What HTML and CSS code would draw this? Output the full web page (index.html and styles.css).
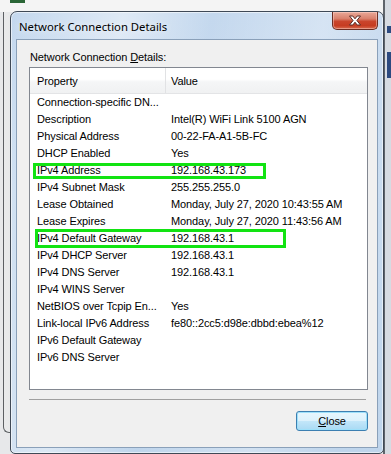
FILE: index.html
```html
<!DOCTYPE html>
<html>
<head>
<meta charset="utf-8">
<title>Network Connection Details</title>
<link rel="stylesheet" href="styles.css">
</head>
<body>
<div class="desktop">
  <div class="topstrip"><span class="greenblock"></span></div>
  <div class="bgwin"></div>
  <div class="rightstrip">
    <span class="rs-dark"></span>
    <span class="rs-blue rs-blue1"></span>
    <span class="rs-blue rs-blue2"></span>
  </div>

  <div class="dialog">
    <div class="titlebar">
      <span class="title">Network Connection Details</span>
      <button class="xbtn" aria-label="Close">
        <svg width="14" height="11" viewBox="0 0 14 11">
          <path d="M1.5 1 H4.8 L7 3.8 L9.2 1 H12.5 L8.9 5.5 L12.5 10 H9.2 L7 7.2 L4.8 10 H1.5 L5.1 5.5 Z" fill="#ffffff" stroke="#5a2b24" stroke-width="1" stroke-linejoin="round"/>
        </svg>
      </button>
    </div>
    <div class="client">
      <div class="label">Network Connection <u>D</u>etails:</div>
      <div class="listview">
        <div class="header">
          <div class="hcol c1">Property</div>
          <div class="hcol c2">Value</div>
        </div>
        <div class="rows">
          <div class="row"><span class="c1">Connection-specific DN...</span><span class="c2"></span></div>
          <div class="row"><span class="c1">Description</span><span class="c2">Intel(R) WiFi Link 5100 AGN</span></div>
          <div class="row"><span class="c1">Physical Address</span><span class="c2">00-22-FA-A1-5B-FC</span></div>
          <div class="row"><span class="c1">DHCP Enabled</span><span class="c2">Yes</span></div>
          <div class="row"><span class="c1">IPv4 Address</span><span class="c2">192.168.43.173</span></div>
          <div class="row"><span class="c1">IPv4 Subnet Mask</span><span class="c2">255.255.255.0</span></div>
          <div class="row"><span class="c1">Lease Obtained</span><span class="c2">Monday, July 27, 2020 10:43:55 AM</span></div>
          <div class="row"><span class="c1">Lease Expires</span><span class="c2">Monday, July 27, 2020 11:43:56 AM</span></div>
          <div class="row"><span class="c1">IPv4 Default Gateway</span><span class="c2">192.168.43.1</span></div>
          <div class="row"><span class="c1">IPv4 DHCP Server</span><span class="c2">192.168.43.1</span></div>
          <div class="row"><span class="c1">IPv4 DNS Server</span><span class="c2">192.168.43.1</span></div>
          <div class="row"><span class="c1">IPv4 WINS Server</span><span class="c2"></span></div>
          <div class="row"><span class="c1">NetBIOS over Tcpip En...</span><span class="c2">Yes</span></div>
          <div class="row"><span class="c1">Link-local IPv6 Address</span><span class="c2">fe80::2cc5:d98e:dbbd:ebea%12</span></div>
          <div class="row"><span class="c1">IPv6 Default Gateway</span><span class="c2"></span></div>
          <div class="row"><span class="c1">IPv6 DNS Server</span><span class="c2"></span></div>
        </div>
      </div>
      <div class="sep"></div>
      <div class="footer">
        <button class="closebtn"><u>C</u>lose</button>
      </div>
    </div>
  </div>

  <div class="hl hl1"></div>
  <div class="hl hl2"></div>
</div>
</body>
</html>
```

FILE: styles.css
```css
* { box-sizing: border-box; }

html, body {
  margin: 0;
  padding: 0;
}

body {
  width: 391px;
  height: 454px;
  overflow: hidden;
  background: #e7e8ea;
  font-family: "Liberation Sans", Arial, sans-serif;
  font-size: 11px;
  letter-spacing: -0.1px;
  color: #000;
}

.desktop {
  position: relative;
  width: 391px;
  height: 454px;
  overflow: hidden;
}

/* background windows (free desktop canvas) */
.topstrip {
  position: absolute;
  left: 0;
  top: 0;
  width: 391px;
  height: 12px;
  background: #f4f4f4;
}

.greenblock {
  position: absolute;
  left: 10px;
  top: 0;
  width: 15px;
  height: 3px;
  background: #2a6536;
}

.bgwin {
  position: absolute;
  left: 3px;
  top: 12px;
  width: 40px;
  height: 421px;
  border-left: 1px solid #5c5f63;
  border-bottom: 1px solid #5c5f63;
  border-bottom-left-radius: 6px;
  background: linear-gradient(to right, #e9eaeb, #dcdde0);
}

.rightstrip {
  position: absolute;
  left: 383px;
  top: 0;
  width: 8px;
  height: 454px;
  background: #d6dbe2;
}

.rs-dark {
  position: absolute;
  left: 0;
  top: 0;
  width: 2px;
  height: 454px;
  background: #5f646b;
}

.rs-blue {
  position: absolute;
  left: 4px;
  width: 4px;
  background: #2c4a80;
}

.rs-blue1 {
  top: 26px;
  height: 7px;
}

.rs-blue2 {
  top: 52px;
  height: 26px;
}

/* dialog window */
.dialog {
  position: absolute;
  left: 10px;
  top: 11px;
  width: 374px;
  height: 443px;
  border: 1px solid #3f4956;
  border-radius: 7px 7px 5px 5px;
  background:
    linear-gradient(100deg, rgba(255,255,255,0) 0%, rgba(255,255,255,0.45) 25%, rgba(255,255,255,0) 45%, rgba(255,255,255,0.3) 70%, rgba(255,255,255,0) 90%),
    linear-gradient(to bottom, #c4d8ee, #c9dcf0 40%, #bfd5ec);
  box-shadow: inset 0 0 0 1px rgba(255,255,255,0.55);
  padding: 0 5px 5px 5px;
  display: flex;
  flex-direction: column;
}

.titlebar {
  height: 27px;
  display: flex;
  align-items: flex-start;
}

.title {
  font-family: "Noto Sans", "Open Sans", sans-serif;
  font-size: 11.3px;
  letter-spacing: 0;
  line-height: 16px;
  padding-top: 7px;
  margin-left: 3px;
  color: #000;
  text-shadow: 0 0 6px rgba(255,255,255,0.9);
}

.xbtn {
  margin-left: auto;
  width: 46px;
  height: 18px;
  padding: 0;
  border: 1px solid #6b2d23;
  border-top: none;
  border-radius: 0 0 5px 5px;
  background: linear-gradient(to bottom, #e9a898 0%, #d9806c 40%, #c9452c 55%, #c63c22 80%, #d66a4f 100%);
  box-shadow: inset 0 0 0 1px rgba(255,220,210,0.45);
  display: flex;
  align-items: center;
  justify-content: center;
}

.xbtn svg { display: block; }

.client {
  flex: 1;
  background: #f0f0f0;
  border: 1px solid #8aa0b9;
  padding: 11px 9px 0 12px;
  display: flex;
  flex-direction: column;
}

.label {
  line-height: 13px;
  height: 13px;
  padding-left: 1px;
  margin-bottom: 3px;
}

.listview {
  height: 323px;
  border: 1px solid #828790;
  background: #fff;
  display: flex;
  flex-direction: column;
}

.header {
  height: 26px;
  flex: none;
  display: flex;
  background: linear-gradient(to bottom, #ffffff 0%, #ffffff 45%, #f5f6f7 55%, #f0f1f2 100%);
  border-bottom: 1px solid #e3e4e6;
}

.hcol {
  line-height: 25px;
  padding-top: 1px;
}

.header .c1 {
  width: 136px;
  padding-left: 7px;
  border-right: 1px solid #e1e2e4;
}

.header .c2 {
  flex: 1;
  padding-left: 5px;
}

.rows {
  display: flex;
  flex-direction: column;
}

.row {
  display: flex;
  height: 17px;
  line-height: 17px;
  white-space: nowrap;
}

.row .c1 {
  width: 136px;
  padding-left: 7px;
  overflow: hidden;
}

.row .c2 {
  flex: 1;
  padding-left: 5px;
}

.sep {
  margin-top: 9px;
  height: 1px;
  width: 337px;
  background: #a0a0a0;
}

.footer {
  display: flex;
  justify-content: flex-end;
  padding-top: 11px;
}

.closebtn {
  width: 72px;
  height: 20px;
  padding: 0;
  font-family: "Liberation Sans", Arial, sans-serif;
  font-size: 11px;
  letter-spacing: -0.1px;
  color: #000;
  border: 1px solid #3c7fb1;
  border-radius: 3px;
  background: linear-gradient(to bottom, #e8f6fd 0%, #dcf1fc 48%, #c2e6f9 52%, #a9daf4 100%);
  box-shadow: inset 0 0 0 1px #9ee0fa;
}

/* green annotation boxes drawn over the screenshot */
.hl {
  position: absolute;
  border: 3px solid #12e312;
}

.hl1 {
  left: 33px;
  top: 163px;
  width: 233px;
  height: 16px;
}

.hl2 {
  left: 35px;
  top: 229px;
  width: 251px;
  height: 19px;
}
```
